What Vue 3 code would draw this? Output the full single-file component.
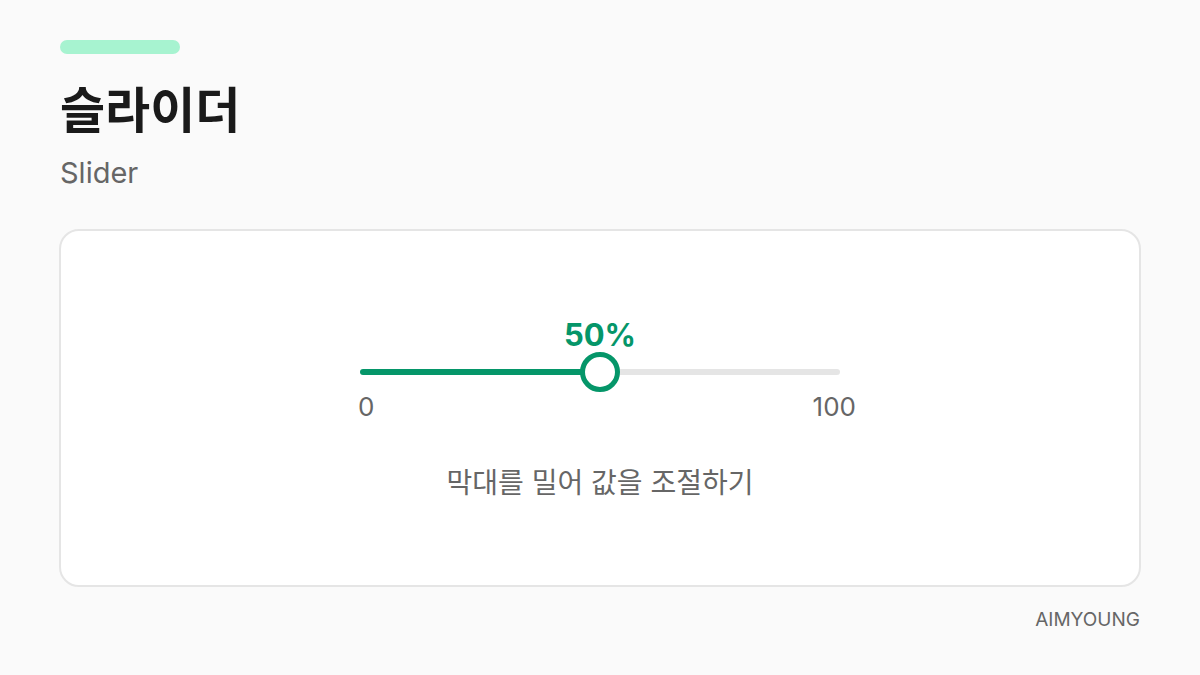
<template>
  <main class="page">
    <header class="header">
      <div class="accent"></div>
      <h1>슬라이더</h1>
      <p class="subtitle">Slider</p>
    </header>

    <section class="card">
      <div class="slider">
        <output class="value" for="amount">{{ value }}%</output>
        <input
          id="amount"
          v-model.number="value"
          class="range"
          type="range"
          :min="min"
          :max="max"
          aria-labelledby="amount-label"
          :style="{ '--fill': percent + '%' }"
        />
        <div class="limits">
          <span>{{ min }}</span>
          <span>{{ max }}</span>
        </div>
      </div>
      <label id="amount-label" class="caption" for="amount">막대를 밀어 값을 조절하기</label>
    </section>

    <footer class="footer">AIMYOUNG</footer>
  </main>
</template>

<script setup>
import { ref, computed } from 'vue'

const min = 0
const max = 100
const value = ref(50)

const percent = computed(() => ((value.value - min) / (max - min)) * 100)
</script>

<style>
body {
  margin: 0;
  background: #fafafa;
}
</style>

<style scoped>
.page {
  display: flex;
  flex-direction: column;
  box-sizing: border-box;
  min-height: 100vh;
  padding: 40px 59px 43px;
  background: #fafafa;
  color: #666;
  font-family: Inter, "Noto Sans CJK KR", sans-serif;
}
.header {
  padding: 0 1px;
}
.accent {
  width: 120px;
  height: 14px;
  border-radius: 7px;
  background: #a7f3d0;
}
h1 {
  margin: 25px 0 0;
  color: #1a1a1a;
  font-size: 49px;
  font-weight: 700;
  line-height: 64px;
}
.subtitle {
  margin: 12px 0 0;
  font-size: 29px;
  line-height: 36px;
}
.card {
  display: flex;
  flex: 1;
  flex-direction: column;
  align-items: center;
  justify-content: center;
  margin-top: 38px;
  padding-top: 5px;
  border: 2px solid #e5e5e5;
  border-radius: 20px;
  background: #fff;
}
.slider {
  display: flex;
  flex-direction: column;
  width: 480px;
  max-width: 80%;
}
.value {
  align-self: center;
  color: #059669;
  font-size: 31px;
  font-weight: 700;
  line-height: 34px;
}
.range {
  appearance: none;
  width: 100%;
  height: 40px;
  margin: 0;
  background: transparent;
  cursor: pointer;
}
.range::-webkit-slider-runnable-track {
  height: 6px;
  border-radius: 3px;
  background: linear-gradient(to right, #059669 var(--fill), #e5e5e5 var(--fill));
}
.range::-webkit-slider-thumb {
  appearance: none;
  box-sizing: border-box;
  width: 40px;
  height: 40px;
  margin-top: -17px;
  border: 5px solid #059669;
  border-radius: 50%;
  background: #fff;
}
.limits {
  display: flex;
  justify-content: space-between;
  margin: 0 -16px 0 -2px;
  font-size: 26px;
  line-height: 30px;
}
.caption {
  margin-top: 41px;
  font-size: 28px;
  line-height: 40px;
}
.footer {
  margin-top: 21px;
  padding: 0 1px;
  font-size: 19px;
  line-height: 24px;
  text-align: right;
}
</style>
